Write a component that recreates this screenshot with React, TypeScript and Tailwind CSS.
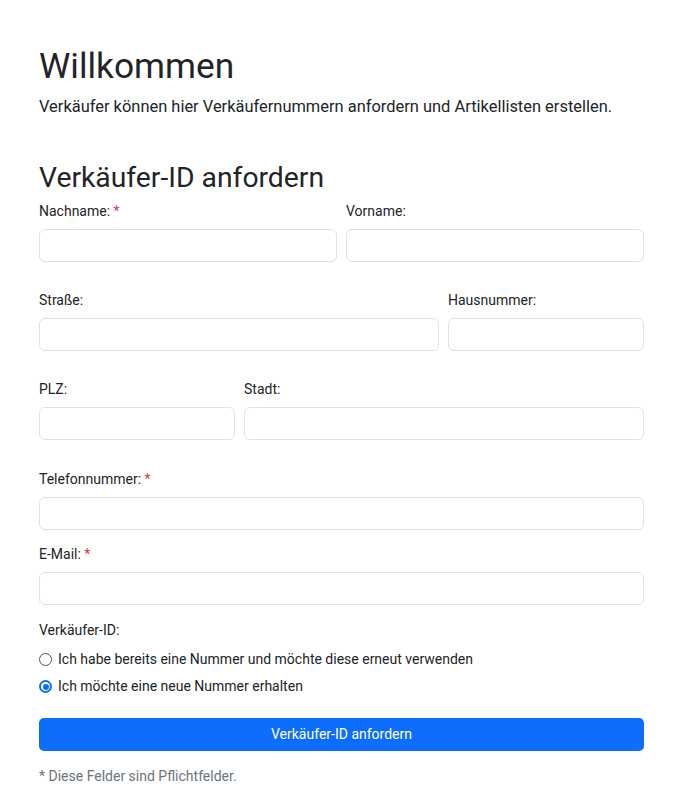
import React from "react";

const inputCls = "block w-full h-[33px] rounded-[6px] border border-[#dee2e6] bg-white";
const labelCls = "block text-[14px] leading-[22px] mb-[7px] text-[#212529]";

function Field({ label, req, className = "" }: { label: string; req?: boolean; className?: string }) {
  return (
    <div className={className}>
      <label className={labelCls}>
        {label}
        {req && <span className="text-[#dc3545]"> *</span>}
      </label>
      <input type="text" className={inputCls} />
    </div>
  );
}

function Radio({ checked, label }: { checked?: boolean; label: string }) {
  return (
    <div className="flex items-center h-[27px] gap-[6px]">
      {checked ? (
        <span className="w-[13px] h-[13px] rounded-full bg-[#0d6efd] flex items-center justify-center">
          <span className="w-[9px] h-[9px] rounded-full bg-white flex items-center justify-center">
            <span className="w-[6px] h-[6px] rounded-full bg-[#0d6efd]" />
          </span>
        </span>
      ) : (
        <span className="w-[13px] h-[13px] rounded-full border border-[#555]" />
      )}
      <span className="text-[14px] text-[#212529]">{label}</span>
    </div>
  );
}

export default function App() {
  return (
    <div className="min-h-[800px] bg-white" style={{ fontFamily: 'Roboto, "Noto Sans", sans-serif' }}>
      <div className="w-[605px] ml-[39px] pt-[44px]">
        <h1 className="text-[35.3px] leading-[44px] text-[#212529]">Willkommen</h1>
        <p className="text-[16.45px] leading-[24px] text-[#212529] mt-[7px]">
          Verkäufer können hier Verkäufernummern anfordern und Artikellisten erstellen.
        </p>
        <h2 className="text-[28.3px] leading-[36px] text-[#212529] mt-[41px]">Verkäufer-ID anfordern</h2>

        <div className="flex gap-[9px] mt-[4px]">
          <Field label="Nachname:" req className="flex-1" />
          <Field label="Vorname:" className="flex-1" />
        </div>
        <div className="flex gap-[9px] mt-[27px]">
          <Field label="Straße:" className="w-[400px]" />
          <Field label="Hausnummer:" className="flex-1" />
        </div>
        <div className="flex gap-[9px] mt-[27px]">
          <Field label="PLZ:" className="w-[196px]" />
          <Field label="Stadt:" className="flex-1" />
        </div>
        <Field label="Telefonnummer:" req className="mt-[28px]" />
        <Field label="E-Mail:" req className="mt-[13px]" />

        <div className="mt-[14px]">
          <div className="text-[14px] leading-[22px] text-[#212529] mb-[5px]">Verkäufer-ID:</div>
          <Radio label="Ich habe bereits eine Nummer und möchte diese erneut verwenden" />
          <Radio checked label="Ich möchte eine neue Nummer erhalten" />
        </div>

        <button className="mt-[18px] w-full h-[33px] rounded-[5px] bg-[#0d6efd] text-white text-[14px]">
          Verkäufer-ID anfordern
        </button>
        <p className="mt-[15px] text-[14px] leading-[20px] text-[#6c757d]">* Diese Felder sind Pflichtfelder.</p>
      </div>
    </div>
  );
}
